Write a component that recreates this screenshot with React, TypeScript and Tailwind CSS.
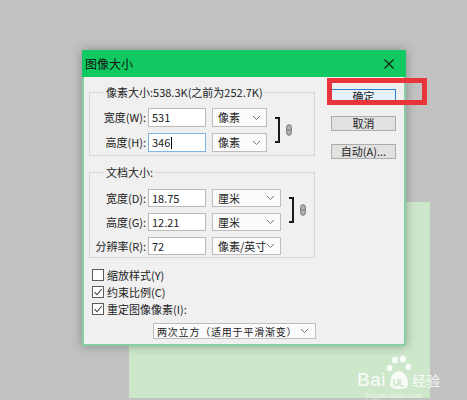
import React from "react";

function Chevron() {
  return (
    <svg width="9" height="6" viewBox="0 0 9 6" className="shrink-0">
      <path d="M1 1 L4.5 4.5 L8 1" fill="none" stroke="#7a7a7a" strokeWidth="1" />
    </svg>
  );
}

function Chain() {
  return (
    <svg width="6" height="12" viewBox="0 0 6 12" className="shrink-0">
      <rect x="0.75" y="0.75" width="4.5" height="10.5" rx="2.2" fill="#b5b5b5" stroke="#6d6d6d" strokeWidth="1" />
      <path d="M1.5 6 H4.5" stroke="#6d6d6d" strokeWidth="1" />
    </svg>
  );
}

function Field({ value, focused = false, h }: { value: string; focused?: boolean; h: string }) {
  return (
    <div
      className={`w-[58px] ${h} bg-white border flex items-center pl-[3px] text-[11px] text-[#222] ${
        focused ? "border-[#7fb6e6]" : "border-[#b9b9b9]"
      }`}
    >
      {value}
      {focused && <span className="inline-block w-px h-[12px] bg-black ml-[1px]" />}
    </div>
  );
}

function Select({ value, w, h }: { value: string; w: string; h: string }) {
  return (
    <div className={`${w} ${h} bg-[#fbfbfb] border border-[#bdbdbd] flex items-center justify-between pl-[5px] pr-[5px] text-[11px] text-[#222] whitespace-nowrap`}>
      <span>{value}</span>
      <Chevron />
    </div>
  );
}

function Bracket() {
  return <div className="w-[5px] h-full border-t-2 border-r-2 border-b-2 border-[#1a1a1a]" />;
}

function Check({ checked, label }: { checked: boolean; label: string }) {
  return (
    <div className="flex items-center h-[12px] ml-[3px] gap-[3px]">
      <div className="w-[12px] h-[12px] bg-white border border-[#5a5a5a] flex items-center justify-center">
        {checked && (
          <svg width="10" height="10" viewBox="0 0 10 10">
            <path d="M1.5 5.2 L4 7.6 L8.8 2" fill="none" stroke="#4a4a4a" strokeWidth="1.1" />
          </svg>
        )}
      </div>
      <span className="text-[11px] text-[#222] leading-none">{label}</span>
    </div>
  );
}

function Button({ label, primary = false }: { label: string; primary?: boolean }) {
  return (
    <div
      className={`w-[65px] h-[15px] flex items-center justify-center text-[11px] text-[#222] leading-none border ${
        primary ? "bg-[#e5f1fb] border-[#2d7fd0]" : "bg-[#e1e1e1] border-[#adadad]"
      }`}
    >
      {label}
    </div>
  );
}

export default function App() {
  return (
    <div className="relative w-[467px] h-[400px] overflow-hidden bg-[#c2c2c2] font-['Noto_Sans_CJK_SC',sans-serif]">
      {/* canvas image */}
      <div className="absolute left-[129px] top-[202px] w-[301px] h-[196px] bg-[#cde7cb]" />

      {/* Baidu watermark */}
      <div className="absolute left-[357px] top-[354px] flex items-end text-white/85 select-none">
        <span className="font-['Liberation_Sans',sans-serif] text-[19px] leading-none tracking-[0.5px]">Bai</span>
        <svg width="26" height="36" viewBox="0 0 26 36" className="-mb-[1px]">
          <g fill="rgba(255,255,255,0.85)">
            <ellipse cx="9" cy="6" rx="3" ry="3.5" />
            <ellipse cx="17" cy="5" rx="3" ry="3.5" />
            <ellipse cx="3.5" cy="14" rx="2.8" ry="3.3" />
            <ellipse cx="22.5" cy="13" rx="2.8" ry="3.3" />
            <path d="M4 30 C4 22 9 17 13 17 C17 17 22 22 22 30 C22 34 18 35 13 35 C8 35 4 34 4 30 Z" />
          </g>
          <path d="M8 25 V30 C8 32 12 32 12 30 V25 M14 25 V32 M14 32 H18" fill="none" stroke="#cde7cb" strokeWidth="1.6" />
        </svg>
        <span className="text-[14px] leading-none mb-[2px]">经验</span>
      </div>
      <div className="absolute left-[365px] top-[392px] text-[7px] leading-none text-white/60 font-['Liberation_Sans',sans-serif]">
        jingyan.baidu.com
      </div>

      {/* dialog */}
      <div className="absolute left-[82px] top-[50px] w-[324px] h-[296px] flex flex-col shadow-[0_0_10px_rgba(0,0,0,0.3)]">
        <div className="h-[27px] bg-[#10ca61] flex items-center justify-between pl-[3px] pr-[12px] shrink-0">
          <span className="text-[12px] text-[#111] leading-none">图像大小</span>
          <svg width="10" height="10" viewBox="0 0 10 10">
            <path d="M0.5 0.5 L9.5 9.5 M9.5 0.5 L0.5 9.5" stroke="#1a1a1a" strokeWidth="1.1" />
          </svg>
        </div>
        <div className="flex-1 flex bg-[#f0f0f0] border-x-2 border-b-2 border-[#86cfa3]">
          {/* left column */}
          <div className="ml-[5px] w-[226px] flex flex-col">
            {/* group 1 */}
            <div className="relative mt-[15px] border border-[#d5d5d5] pt-[15px] pb-[3px]">
              <span className="absolute -top-[8px] left-[14px] px-[2px] bg-[#f0f0f0] text-[11px] leading-[14px] text-[#222]">
                像素大小:538.3K(之前为252.7K)
              </span>
              <div className="flex items-stretch">
                <div className="flex flex-col gap-[6px]">
                  <div className="flex items-center h-[19px]">
                    <span className="w-[58px] text-right text-[11px] text-[#222] pr-[2px]">宽度(W):</span>
                    <Field value="531" h="h-[19px]" />
                    <div className="w-[6px]" />
                    <Select value="像素" w="w-[55px]" h="h-[19px]" />
                  </div>
                  <div className="flex items-center h-[19px]">
                    <span className="w-[58px] text-right text-[11px] text-[#222] pr-[2px]">高度(H):</span>
                    <Field value="346" focused h="h-[19px]" />
                    <div className="w-[6px]" />
                    <Select value="像素" w="w-[55px]" h="h-[19px]" />
                  </div>
                </div>
                <div className="ml-[8px] py-[9px] flex items-center gap-[6px]">
                  <Bracket />
                  <Chain />
                </div>
              </div>
            </div>

            {/* group 2 */}
            <div className="relative mt-[16px] border border-[#d5d5d5] pt-[16px] pb-[2px]">
              <span className="absolute -top-[8px] left-[14px] px-[2px] bg-[#f0f0f0] text-[11px] leading-[14px] text-[#222]">
                文档大小:
              </span>
              <div className="flex items-start">
                <div className="flex flex-col gap-[6px]">
                  <div className="flex items-center h-[18px]">
                    <span className="w-[58px] text-right text-[11px] text-[#222] pr-[2px]">宽度(D):</span>
                    <Field value="18.75" h="h-[18px]" />
                    <div className="w-[6px]" />
                    <Select value="厘米" w="w-[69px]" h="h-[18px]" />
                  </div>
                  <div className="flex items-center h-[18px]">
                    <span className="w-[58px] text-right text-[11px] text-[#222] pr-[2px]">高度(G):</span>
                    <Field value="12.21" h="h-[18px]" />
                    <div className="w-[6px]" />
                    <Select value="厘米" w="w-[69px]" h="h-[18px]" />
                  </div>
                  <div className="flex items-center h-[18px]">
                    <span className="w-[58px] text-right text-[11px] text-[#222] pr-[2px] whitespace-nowrap">分辨率(R):</span>
                    <Field value="72" h="h-[18px]" />
                    <div className="w-[6px]" />
                    <Select value="像素/英寸" w="w-[69px]" h="h-[18px]" />
                  </div>
                </div>
                <div className="ml-[8px] mt-[8px] h-[26px] flex items-center gap-[6px]">
                  <Bracket />
                  <Chain />
                </div>
              </div>
            </div>

            {/* checkboxes */}
            <div className="mt-[11px] flex flex-col gap-[5px]">
              <Check checked={false} label="缩放样式(Y)" />
              <Check checked label="约束比例(C)" />
              <Check checked label="重定图像像素(I):" />
            </div>

            <div className="ml-[64px] mt-[8px] w-[163px] h-[16px] bg-[#fbfbfb] border border-[#bdbdbd] flex items-center justify-between pl-[3px] pr-[6px] text-[10px] text-[#222] whitespace-nowrap">
              <span className="tracking-[0.8px]">两次立方（适用于平滑渐变）</span>
              <Chevron />
            </div>
          </div>

          {/* right column */}
          <div className="ml-[16px] pt-[12px] flex flex-col gap-[12px]">
            <Button label="确定" primary />
            <Button label="取消" />
            <div className="mt-[1px]">
              <Button label="自动(A)..." />
            </div>
          </div>
        </div>
      </div>

      {/* red highlight */}
      <div className="absolute left-[327px] top-[78px] w-[100px] h-[27px] border-[5px] border-[#e8353b]" />
    </div>
  );
}
